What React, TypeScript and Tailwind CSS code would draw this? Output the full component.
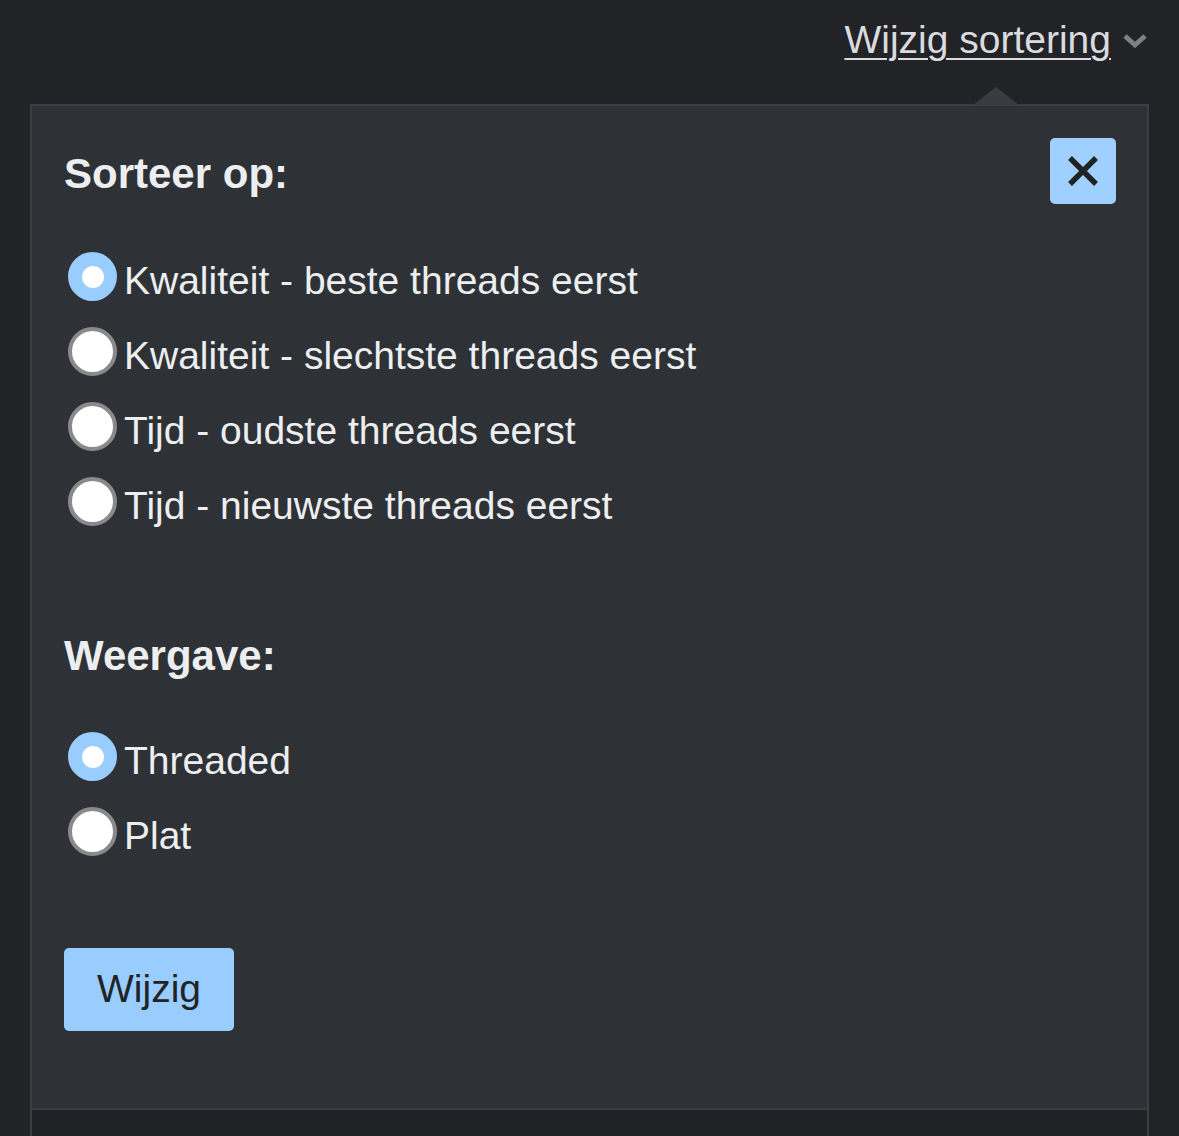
import React from "react";

const font = { fontFamily: '"Liberation Sans", Arial, sans-serif' };

function Radio({ checked, label }: { checked: boolean; label: string }) {
  return (
    <label className="flex items-center h-[75px]">
      {checked ? (
        <span className="w-[49px] h-[49px] rounded-full bg-[#99ccff] flex items-center justify-center shrink-0">
          <span className="w-[22px] h-[22px] rounded-full bg-white" />
        </span>
      ) : (
        <span className="w-[49px] h-[49px] rounded-full bg-white border-[4px] border-[#8a8a8c] shrink-0" />
      )}
      <span className="ml-[7px] mt-[8px] text-[39px] text-[#eceef0] leading-none">{label}</span>
    </label>
  );
}

export default function App() {
  return (
    <div className="w-[1179px] h-[1136px] bg-[#212327] overflow-hidden" style={font}>
      <div className="h-[104px] flex justify-end items-start pr-[31px] pt-[17px]">
        <a className="text-[39px] leading-[46px] text-[#d9dbde] underline decoration-2 underline-offset-[5px]">
          Wijzig sortering
        </a>
        <svg className="ml-[11px] mt-[15px]" width="26" height="18" viewBox="0 0 26 18">
          <path d="M3 4 L13 13 L23 4" stroke="#7d8084" strokeWidth="5" fill="none" />
        </svg>
      </div>
      <div className="relative mx-[30px] border-x-2 border-t-2 border-[#3a3f44]">
        <div className="absolute right-[128px] -top-[19px] w-0 h-0 border-l-[23px] border-r-[23px] border-b-[18px] border-l-transparent border-r-transparent border-b-[#383c40]" />
        <div className="bg-[#2e3236] border-b-2 border-[#3a3f44] pl-[32px] pr-[31px] pt-[32px] pb-[77px]">
          <div className="flex justify-between items-start">
            <h2 className="text-[42px] font-bold text-[#eceef0] leading-none mt-[15px]">Sorteer op:</h2>
            <button className="w-[66px] h-[66px] rounded-[5px] bg-[#a0d0ff] flex items-center justify-center">
              <svg width="34" height="34" viewBox="0 0 34 34">
                <path d="M4 4 L30 30 M30 4 L4 30" stroke="#202226" strokeWidth="5.5" />
              </svg>
            </button>
          </div>
          <div className="mt-[35px] pl-[4px]">
            <Radio checked label="Kwaliteit - beste threads eerst" />
            <Radio checked={false} label="Kwaliteit - slechtste threads eerst" />
            <Radio checked={false} label="Tijd - oudste threads eerst" />
            <Radio checked={false} label="Tijd - nieuwste threads eerst" />
          </div>
          <h2 className="text-[42px] font-bold text-[#eceef0] leading-none mt-[96px]">Weergave:</h2>
          <div className="mt-[42px] pl-[4px]">
            <Radio checked label="Threaded" />
            <Radio checked={false} label="Plat" />
          </div>
          <button className="mt-[79px] w-[170px] h-[83px] rounded-[5px] bg-[#99ccff] text-[39px] text-[#222325]">
            Wijzig
          </button>
        </div>
        <div className="h-[40px] bg-[#202226]" />
      </div>
    </div>
  );
}
